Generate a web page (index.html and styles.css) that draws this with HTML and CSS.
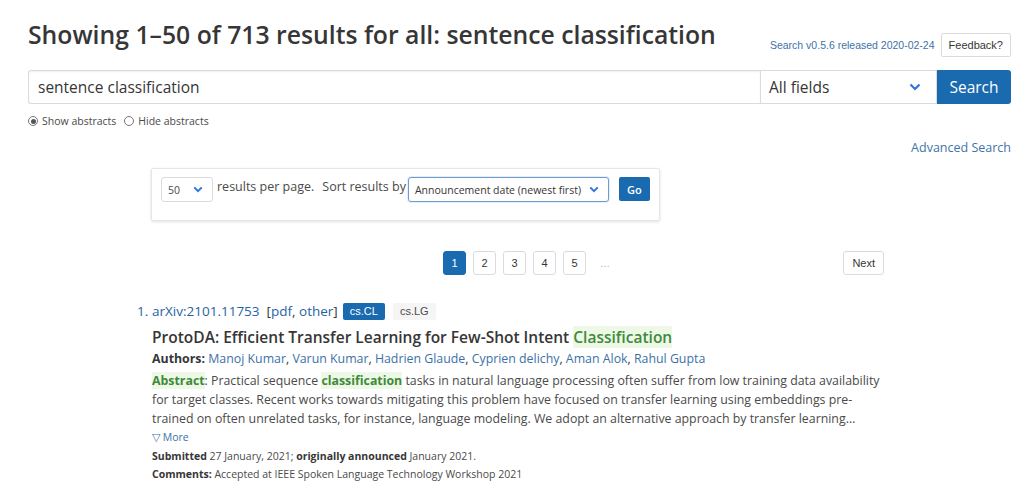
FILE: index.html
```html
<!DOCTYPE html>
<html lang="en">
<head>
<meta charset="utf-8">
<title>Search | arXiv e-print repository</title>
<link rel="stylesheet" href="styles.css">
</head>
<body>
<div class="page">
  <div class="topbar">
    <h1 class="title">Showing 1&ndash;50 of 713 results for all: sentence classification</h1>
    <div class="meta">
      <a class="release" href="#">Search v0.5.6 released 2020-02-24</a>
      <span class="feedback">Feedback?</span>
    </div>
  </div>

  <div class="searchrow">
    <div class="query">sentence classification</div>
    <div class="field">
      <span>All fields</span>
      <svg class="chev" width="12" height="8" viewBox="0 0 12 8"><path d="M1.5 1.5 L6 6 L10.5 1.5" fill="none" stroke="#3273dc" stroke-width="2.2"/></svg>
    </div>
    <div class="searchbtn">Search</div>
  </div>

  <div class="radios">
    <label class="radio"><span class="dot on"></span>Show abstracts</label>
    <label class="radio"><span class="dot"></span>Hide abstracts</label>
  </div>

  <div class="advrow"><a class="adv" href="#">Advanced Search</a></div>

  <div class="results">
    <div class="options">
      <div class="sel small"><span>50</span><svg class="chev" width="10" height="7" viewBox="0 0 12 8"><path d="M1.5 1.5 L6 6 L10.5 1.5" fill="none" stroke="#3273dc" stroke-width="2.4"/></svg></div>
      <span class="opt-label">results per page.</span>
      <span class="opt-label sort">Sort results by</span>
      <div class="sel wide"><span>Announcement date (newest first)</span><svg class="chev" width="10" height="7" viewBox="0 0 12 8"><path d="M1.5 1.5 L6 6 L10.5 1.5" fill="none" stroke="#3273dc" stroke-width="2.4"/></svg></div>
      <span class="go">Go</span>
    </div>

    <nav class="pager">
      <ul class="pages">
        <li class="pg current">1</li>
        <li class="pg">2</li>
        <li class="pg">3</li>
        <li class="pg">4</li>
        <li class="pg">5</li>
        <li class="ellipsis">&hellip;</li>
      </ul>
      <span class="next">Next</span>
    </nav>

    <ol class="list">
      <li class="item">
        <div class="idline">
          <span class="num">1.</span>
          <a class="arxiv" href="#">arXiv:2101.11753</a>
          <span class="links">[<a href="#">pdf</a>, <a href="#">other</a>]</span>
          <span class="tag primary">cs.CL</span>
          <span class="tag">cs.LG</span>
        </div>
        <p class="ptitle">ProtoDA: Efficient Transfer Learning for Few-Shot Intent <span class="hl">Classification</span></p>
        <p class="authors"><b>Authors:</b> <a href="#">Manoj Kumar</a>, <a href="#">Varun Kumar</a>, <a href="#">Hadrien Glaude</a>, <a href="#">Cyprien delichy</a>, <a href="#">Aman Alok</a>, <a href="#">Rahul Gupta</a></p>
        <p class="abstract"><span class="hl strong">Abstract</span>: Practical sequence <span class="hl strong">classification</span> tasks in natural language processing often suffer from low training data availability for target classes. Recent works towards mitigating this problem have focused on transfer learning using embeddings pre-trained on often unrelated tasks, for instance, language modeling. We adopt an alternative approach by transfer learning&hellip;</p>
        <p class="more"><a href="#">&#9661;&nbsp;More</a></p>
        <p class="small"><b>Submitted</b> 27 January, 2021; <b>originally announced</b> January 2021.</p>
        <p class="small"><b>Comments:</b> Accepted at IEEE Spoken Language Technology Workshop 2021</p>
      </li>
    </ol>
  </div>
</div>
</body>
</html>
```

FILE: styles.css
```css
* { box-sizing: border-box; }
html, body { margin: 0; padding: 0; background: #fff; }
body { font-family: "Open Sans", "Liberation Sans", sans-serif; color: #363636; }
a { text-decoration: none; color: #1f64a3; }
p { margin: 0; }

.page { padding: 0 13px 0 28px; }

.topbar { display: flex; align-items: flex-start; justify-content: space-between; padding-top: 18px; }
.title { margin: 0; font-size: 24.75px; font-weight: 600; line-height: 34px; color: #363636; letter-spacing: 0; white-space: nowrap; }
.meta { display: flex; align-items: center; gap: 6px; margin-top: 15px; }
.release { font-family: "Liberation Sans", Arial, sans-serif; font-size: 10.5px; color: #3d72a7; }
.feedback { font-family: "Liberation Sans", Arial, sans-serif; font-size: 11px; color: #363636; border: 1px solid #dbdbdb; border-radius: 2px; padding: 0 7px; height: 24px; line-height: 22px; }

.searchrow { display: flex; height: 34px; margin-top: 13px; }
.query { flex: 1; border: 1px solid #dbdbdb; border-right: none; border-radius: 3px 0 0 3px; font-size: 15.5px; line-height: 32px; padding-left: 9px; color: #363636; box-shadow: inset 0 1px 2px rgba(10,10,10,0.06); }
.field { width: 177px; border: 1px solid #dbdbdb; display: flex; align-items: center; justify-content: space-between; padding: 0 15px 0 8px; font-size: 15.5px; color: #363636; }
.searchbtn { width: 74px; background: #1a6ab0; color: #fff; font-size: 15.5px; display: flex; align-items: center; justify-content: center; border-radius: 0 3px 3px 0; }

.radios { display: flex; gap: 8px; margin-top: 10px; font-size: 10.5px; color: #4a4a4a; }
.radio { display: flex; align-items: center; gap: 4px; }
.dot { width: 10px; height: 10px; border-radius: 50%; border: 1px solid #767676; display: inline-block; position: relative; }
.dot.on::after { content: ""; position: absolute; left: 1.5px; top: 1.5px; width: 5px; height: 5px; border-radius: 50%; background: #555; }

.advrow { display: flex; justify-content: flex-end; margin-top: 11px; }
.adv { font-size: 12.5px; color: #3e74a8; }

.results { margin-left: 109px; width: 747px; }

.options { margin: 12px 0 0 14px; width: 509px; height: 53px; border: 1px solid #e6e6e6; border-radius: 2px; box-shadow: 0 1px 3px rgba(10,10,10,0.12); display: flex; align-items: flex-start; padding: 8px 0 0 9px; font-size: 12.5px; color: #4a4a4a; white-space: nowrap; }
.options > * { flex-shrink: 0; }
.sel { height: 25px; border: 1px solid #dbdbdb; border-radius: 3px; display: flex; align-items: center; justify-content: space-between; font-size: 10.5px; color: #363636; background: #fff; }
.sel.small { width: 52px; padding: 0 9px 0 6px; }
.sel.wide { width: 201px; padding: 0 9px 0 6px; border-color: #6d9dd0; box-shadow: 0 0 0 1px rgba(50,115,220,0.12); margin-left: 2px; }
.opt-label { margin-left: 4px; line-height: 20px; }
.opt-label.sort { margin-left: 8px; }
.go { margin-left: 10px; width: 31px; height: 24px; background: #1a6ab0; color: #fff; font-size: 11px; font-weight: 600; border-radius: 2px; display: flex; align-items: center; justify-content: center; }

.pager { display: flex; justify-content: space-between; align-items: center; margin: 30px 0 0 306px; }
.pages { list-style: none; margin: 0; padding: 0; display: flex; gap: 7px; align-items: center; }
.pg { width: 23px; height: 24px; border: 1px solid #dbdbdb; border-radius: 3px; display: flex; align-items: center; justify-content: center; font-family: "Liberation Sans", Arial, sans-serif; font-size: 11px; color: #363636; }
.pg.current { background: #1a6ab0; border-color: #1a6ab0; color: #fff; }
.ellipsis { margin-left: 7px; font-size: 10px; color: #b5b5b5; font-family: "Liberation Sans", Arial, sans-serif; }
.next { height: 24px; border: 1px solid #dbdbdb; border-radius: 3px; padding: 0 8px; line-height: 22px; font-family: "Liberation Sans", Arial, sans-serif; font-size: 11px; color: #363636; }

.list { list-style: none; margin: 26px 0 0; padding: 0; }
.item { padding-left: 15px; }
.idline { display: flex; align-items: center; font-size: 13.5px; height: 20px; position: relative; }
.num { position: absolute; left: -15px; color: #1f64a3; }
.arxiv { color: #1f64a3; font-weight: 500; }
.links { margin-left: 7px; color: #363636; }
.links a { color: #1f64a3; }
.tag { font-family: "Liberation Sans", Arial, sans-serif; font-size: 11px; height: 17px; line-height: 17px; padding: 0 7px; border-radius: 2px; background: #f5f5f5; color: #4a4a4a; margin-left: 8px; }
.tag.primary { background: #1a6ab0; color: #fff; margin-left: 5px; }

.ptitle { margin-top: 5px; font-size: 15.5px; font-weight: 600; color: #363636; line-height: 22px; }
.hl { background: #edf8e6; color: #3f8a3a; }
.hl.strong { font-weight: 700; }
.authors { margin-top: 1px; font-size: 12.35px; line-height: 19px; color: #363636; }
.authors b { font-weight: 700; }
.authors a { color: #3b71a8; }
.abstract { margin-top: 3px; font-size: 12.35px; line-height: 19px; color: #4a4a4a; }
.more { font-size: 10.5px; line-height: 16px; margin-top: 1px; }
.more a { color: #3b71a8; }
.small { font-size: 10.5px; line-height: 18px; color: #4a4a4a; }
.more + .small { margin-top: 2px; }
.small b { color: #363636; font-weight: 700; }
```
